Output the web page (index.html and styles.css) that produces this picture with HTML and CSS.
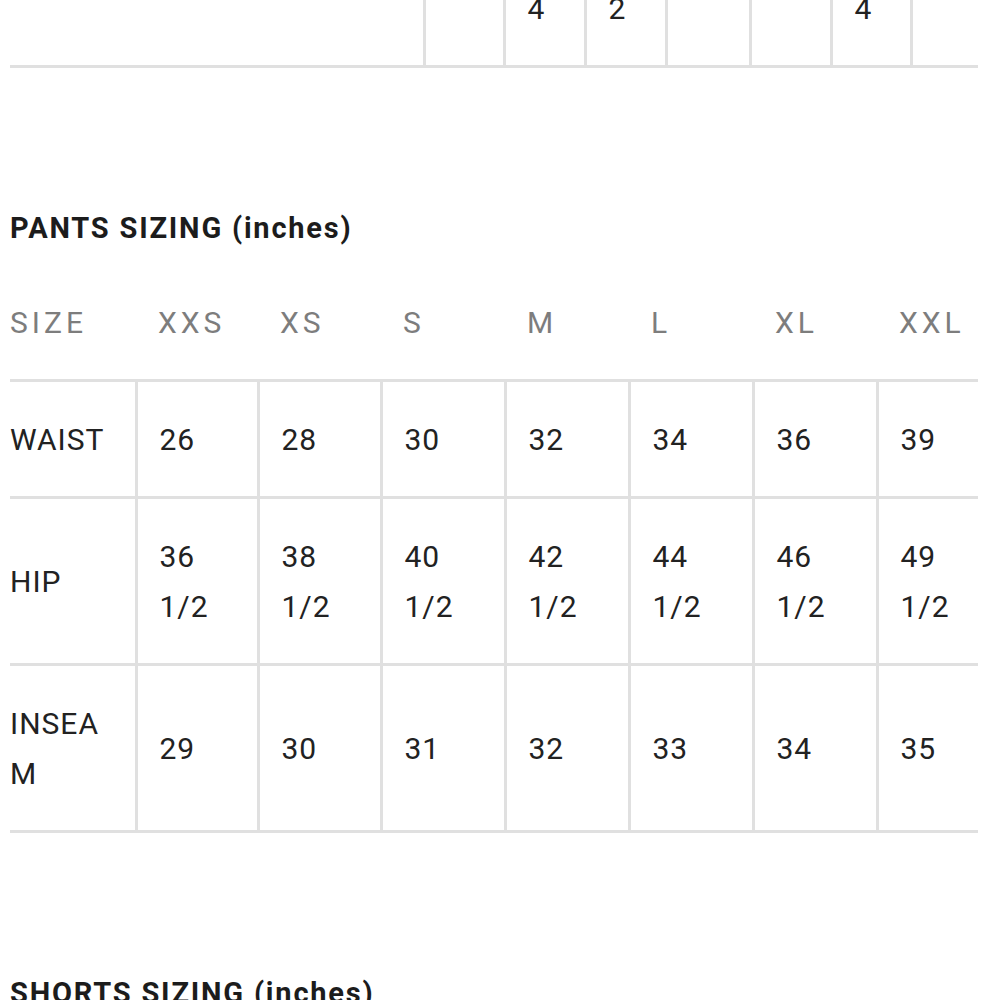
FILE: index.html
```html
<!DOCTYPE html>
<html lang="en">
<head>
<meta charset="utf-8">
<title>Size guide</title>
<link rel="stylesheet" href="styles.css">
</head>
<body>
<div class="page">
  <table class="size-table top-table">
    <tbody>
      <tr>
        <td class="label"></td>
        <td></td>
        <td>1/<br>4</td>
        <td>3/<br>2</td>
        <td></td>
        <td></td>
        <td>1/<br>4</td>
        <td></td>
      </tr>
    </tbody>
  </table>

  <h2 class="section-title">PANTS SIZING (inches)</h2>
  <table class="size-table pants-table">
    <thead>
      <tr>
        <th class="label">SIZE</th>
        <th>XXS</th>
        <th>XS</th>
        <th>S</th>
        <th>M</th>
        <th>L</th>
        <th>XL</th>
        <th>XXL</th>
      </tr>
    </thead>
    <tbody>
      <tr>
        <td class="label">WAIST</td>
        <td>26</td><td>28</td><td>30</td><td>32</td><td>34</td><td>36</td><td>39</td>
      </tr>
      <tr>
        <td class="label">HIP</td>
        <td>36 1/2</td><td>38 1/2</td><td>40 1/2</td><td>42 1/2</td><td>44 1/2</td><td>46 1/2</td><td>49 1/2</td>
      </tr>
      <tr>
        <td class="label">INSEAM</td>
        <td>29</td><td>30</td><td>31</td><td>32</td><td>33</td><td>34</td><td>35</td>
      </tr>
    </tbody>
  </table>

  <h2 class="section-title">SHORTS SIZING (inches)</h2>
</div>
</body>
</html>
```

FILE: styles.css
```css
html, body {
  margin: 0;
  padding: 0;
  background: #ffffff;
}

.page {
  width: 968px;
  padding: 0 22px 0 10px;
  font-family: Roboto, "Liberation Sans", sans-serif;
  color: #222222;
}

.size-table {
  width: 968px;
  border-collapse: collapse;
  table-layout: fixed;
  font-size: 30px;
  line-height: 50px;
  letter-spacing: 1px;
}

.size-table td,
.size-table th {
  box-sizing: border-box;
  padding: 33px 16px 31px 22px;
  text-align: left;
  vertical-align: middle;
  font-weight: 400;
}

.size-table td {
  border-top: 3px solid #e0e0e0;
  border-bottom: 3px solid #e0e0e0;
  border-left: 3px solid #e0e0e0;
}

.size-table td.label,
.size-table th.label {
  padding-left: 0;
  padding-right: 10px;
  border-left: none;
  word-break: break-all;
}

.size-table th {
  color: #7d7d7d;
  letter-spacing: 4px;
  border-bottom: 3px solid #e0e0e0;
}

/* top table: only its last line peeks into view */
.top-table {
  margin-top: -99px;
}

.top-table td {
  border-top: none;
}

.top-table td:nth-child(1) { width: 414px; }
.top-table td:nth-child(2) { width: 80px; }
.top-table td:nth-child(3) { width: 81px; }
.top-table td:nth-child(4) { width: 81px; }
.top-table td:nth-child(5) { width: 84px; }
.top-table td:nth-child(6) { width: 81px; }
.top-table td:nth-child(7) { width: 80px; }

.pants-table th:nth-child(1) { width: 126px; }
.pants-table th:nth-child(2) { width: 122px; }
.pants-table th:nth-child(3) { width: 123px; }
.pants-table th:nth-child(4) { width: 124px; }
.pants-table th:nth-child(5) { width: 124px; }
.pants-table th:nth-child(6) { width: 124px; }
.pants-table th:nth-child(7) { width: 124px; }

.section-title {
  margin: 0;
  padding: 140px 0 0;
  font-size: 29px;
  line-height: 40px;
  font-weight: 700;
  letter-spacing: 1.8px;
  color: #1c1c1c;
}

.pants-table {
  margin-top: 17px;
}
```
